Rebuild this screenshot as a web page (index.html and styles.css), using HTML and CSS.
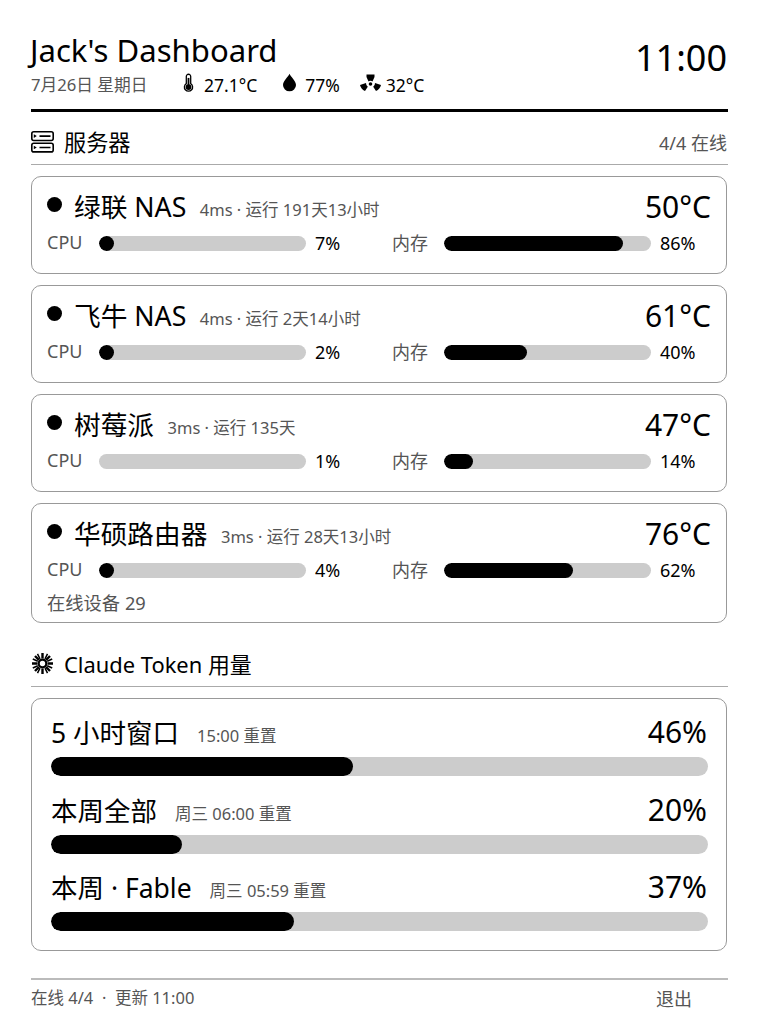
FILE: index.html
```html
<!DOCTYPE html>
<html lang="zh">
<head>
<meta charset="utf-8">
<title>Jack's Dashboard</title>
<link rel="stylesheet" href="styles.css">
</head>
<body>
<div class="page">
  <header class="header">
    <div class="header-left">
      <h1 class="title">Jack's Dashboard</h1>
      <div class="sub">
        <span class="date">7月26日 星期日</span>
        <span class="env env-temp">
          <svg class="ei" viewBox="0 0 12 20"><path d="M6 1a2.400 2.400 0 0 1 2.400 2.400v7.800a4.500 4.500 0 1 1-4.800 0V3.400A2.400 2.400 0 0 1 6 1z" fill="none" stroke="#000" stroke-width="1.400"/><circle cx="6" cy="15" r="3.200" fill="#000"/><rect x="5" y="5" width="2" height="9" fill="#000"/></svg>
          27.1°C</span>
        <span class="env env-hum">
          <svg class="ei drop" viewBox="0 0 14 19"><path d="M7 0C8.300 3.500 14 7.500 14 12.200A7 6.800 0 0 1 0 12.200C0 7.500 5.700 3.500 7 0z" fill="#000"/></svg>
          77%</span>
        <span class="env env-fan">
          <svg class="ei fan" viewBox="0 0 21 18"><path d="M6.500 0.500h8v2.500l-2 4.500a3.500 3.500 0 0 0-4 0l-2-4.500z" fill="#000"/><circle cx="10.500" cy="10" r="1.800" fill="#000"/><path d="M0 11l6-2a4.500 4.500 0 0 0 1.800 3.800L5 17C2.300 16 .5 13.500 0 11z" fill="#000"/><path d="M21 11l-6-2a4.500 4.500 0 0 1-1.800 3.800L16 17c2.700-1 4.500-3.500 5-6z" fill="#000"/></svg>
          32°C</span>
      </div>
    </div>
    <div class="clock">11:00</div>
  </header>

  <section class="section-head">
    <div class="section-title">
      <svg class="si" viewBox="0 0 23 23"><rect x="0.800" y="1.800" width="21.400" height="8.700" rx="2" fill="none" stroke="#000" stroke-width="1.600"/><rect x="0.800" y="13.200" width="21.400" height="8.700" rx="2" fill="none" stroke="#000" stroke-width="1.600"/><path d="M2.800 4.300l3 1.800-3 1.800zM2.800 15.700l3 1.800-3 1.800z" fill="#000"/><path d="M8.500 6.100h11M8.500 17.500h11" stroke="#000" stroke-width="1.600"/></svg>
      服务器
    </div>
    <div class="section-meta">4/4 在线</div>
  </section>

  <div class="cards">
    <article class="card">
      <div class="card-top">
        <span class="dot"></span><span class="name">绿联 NAS</span><span class="info">4ms · 运行 191天13小时</span><span class="temp">50°C</span>
      </div>
      <div class="metrics">
        <span class="mlabel">CPU</span><div class="bar"><div class="fill" style="width:7%"></div></div><span class="mval">7%</span>
        <span class="mlabel">内存</span><div class="bar"><div class="fill" style="width:86.500%"></div></div><span class="mval">86%</span>
      </div>
    </article>
    <article class="card">
      <div class="card-top">
        <span class="dot"></span><span class="name">飞牛 NAS</span><span class="info">4ms · 运行 2天14小时</span><span class="temp">61°C</span>
      </div>
      <div class="metrics">
        <span class="mlabel">CPU</span><div class="bar"><div class="fill" style="width:2%"></div></div><span class="mval">2%</span>
        <span class="mlabel">内存</span><div class="bar"><div class="fill" style="width:40%"></div></div><span class="mval">40%</span>
      </div>
    </article>
    <article class="card">
      <div class="card-top">
        <span class="dot"></span><span class="name">树莓派</span><span class="info">3ms · 运行 135天</span><span class="temp">47°C</span>
      </div>
      <div class="metrics">
        <span class="mlabel">CPU</span><div class="bar"><div class="fill zero" style="width:0"></div></div><span class="mval">1%</span>
        <span class="mlabel">内存</span><div class="bar"><div class="fill" style="width:14%"></div></div><span class="mval">14%</span>
      </div>
    </article>
    <article class="card card-tall">
      <div class="card-top">
        <span class="dot"></span><span class="name">华硕路由器</span><span class="info">3ms · 运行 28天13小时</span><span class="temp">76°C</span>
      </div>
      <div class="metrics">
        <span class="mlabel">CPU</span><div class="bar"><div class="fill" style="width:4%"></div></div><span class="mval">4%</span>
        <span class="mlabel">内存</span><div class="bar"><div class="fill" style="width:62.500%"></div></div><span class="mval">62%</span>
      </div>
      <div class="extra">在线设备 29</div>
    </article>
  </div>

  <section class="section-head token-head">
    <div class="section-title">
      <svg class="si" viewBox="0 0 23 23"><g stroke="#000" stroke-width="2.400" stroke-linecap="butt"><path d="M11.500 1v5.500M11.500 16.500V22M1 11.500h5.500M16.500 11.500H22M4 4l4 4M15 15l4 4M19 4l-4 4M8 15l-4 4"/><path d="M6.500 1.800l2.500 5M16.500 1.800l-2.500 5M6.500 21.200l2.500-5M16.500 21.200l-2.500-5M1.800 7l5 2.300M21.200 7l-5 2.300M1.800 16l5-2.300M21.200 16l-5-2.300" stroke-width="1.500"/></g><circle cx="11.500" cy="11.500" r="3.800" fill="#fff" stroke="#000" stroke-width="2.200"/></svg>
      Claude Token 用量
    </div>
  </section>

  <article class="card token-card">
    <div class="token">
      <div class="token-top"><span class="tname">5 小时窗口</span><span class="tinfo">15:00 重置</span><span class="tpct">46%</span></div>
      <div class="bar big"><div class="fill" style="width:46%"></div></div>
    </div>
    <div class="token">
      <div class="token-top"><span class="tname">本周全部</span><span class="tinfo">周三 06:00 重置</span><span class="tpct">20%</span></div>
      <div class="bar big"><div class="fill" style="width:20%"></div></div>
    </div>
    <div class="token">
      <div class="token-top"><span class="tname">本周 · Fable</span><span class="tinfo">周三 05:59 重置</span><span class="tpct">37%</span></div>
      <div class="bar big"><div class="fill" style="width:37%"></div></div>
    </div>
  </article>

  <footer class="footer">
    <span>在线 4/4 &nbsp;·&nbsp; 更新 11:00</span>
    <span class="logout">退出</span>
  </footer>
</div>
</body>
</html>
```

FILE: styles.css
```css
* { box-sizing: border-box; }
html, body { margin: 0; padding: 0; background: #fff; }
body {
  font-family: "Noto Sans", "Noto Sans CJK SC", sans-serif;
  color: #000;
  width: 758px;
  height: 1024px;
  overflow: hidden;
}
.page { padding: 30px 30px 0 31px; }
.header {
  display: flex;
  justify-content: space-between;
  align-items: flex-start;
  height: 82px;
  border-bottom: 3px solid #000;
}
.title {
  margin: 0 0 0 -1px;
  font-size: 31.100px;
  font-weight: 400;
  line-height: 41px;
}
.sub {
  display: flex;
  align-items: center;
  line-height: 24px;
  height: 24px;
  margin-top: 2px;
}
.date { color: #555; width: 152px; font-size: 16.700px; }
.env { display: flex; align-items: center; font-size: 17.500px; }
.env-temp { gap: 10px; margin-right: 26px; }
.env-hum { gap: 9px; margin-right: 20px; }
.env-fan { gap: 5px; }
.ei { width: 11px; height: 19px; margin-top: -5px; }
.drop { width: 13px; }
.fan { width: 21px; height: 18px; }
.clock { font-size: 36px; line-height: 50px; margin: 3px 1px 0 0; }
.section-head {
  display: flex;
  justify-content: space-between;
  align-items: center;
  height: 53px;
  padding-top: 6px;
  border-bottom: 1px solid #aaa;
}
.section-title { display: flex; align-items: center; gap: 10px; font-size: 22.200px; }
.si { width: 23px; height: 23px; }
.section-meta { color: #555; font-size: 18px; margin: 2px 1px 0 0; }
.cards { display: flex; flex-direction: column; gap: 11px; margin: 11px 1px 0 0; }
.card {
  border: 1px solid #999;
  border-radius: 10px;
  padding: 0 15px;
  height: 98px;
}
.card-tall { height: 120px; }
.card-top { display: flex; align-items: center; height: 60px; }
.dot { width: 15px; height: 15px; border-radius: 50%; background: #000; margin: -6px 12px 0 0; }
.name { font-size: 26.700px; margin-top: -4px; }
.info { font-size: 16.500px; color: #555; margin: 4px 0 0 13.500px; }
.temp { margin: -2px 0 0 auto; font-size: 30px; }
.metrics {
  display: flex;
  align-items: center;
  height: 20px;
  margin-top: -4px;
}
.mlabel { width: 52px; color: #555; font-size: 18px; margin-top: -3px; }
.bar { background: #ccc; border-radius: 8px; height: 15px; overflow: hidden; width: 207px; }
.fill { background: #000; height: 100%; min-width: 15px; border-radius: 8px; }
.fill.zero { min-width: 0; }
.mval { width: 86px; padding-left: 9px; font-size: 18px; }
.metrics .mval:last-child { width: auto; }
.extra { font-size: 18.300px; color: #555; margin-top: 9px; }
.token-head { height: 64px; padding-top: 17px; }
.token-head .section-title { font-size: 21.900px; }
.token-card { height: 253px; margin: 11px 1px 0 0; padding: 15px 18px 0 19px; }
.token { height: 77.500px; }
.token-top { display: flex; align-items: center; height: 43px; }
.tname { font-size: 26.500px; margin-top: -8px; }
.tinfo { font-size: 16.500px; color: #555; margin: -1px 0 0 18px; }
.tpct { margin: -8px 1px 0 auto; font-size: 30px; }
.bar.big { width: 100%; height: 19px; border-radius: 10px; }
.bar.big .fill { border-radius: 10px; }
.footer {
  display: flex;
  justify-content: space-between;
  margin-top: 27px;
  border-top: 2px solid #bbb;
  padding-top: 5px;
  font-size: 16.500px;
  color: #555;
}
.logout { font-size: 18px; margin-right: 36px; }
```
